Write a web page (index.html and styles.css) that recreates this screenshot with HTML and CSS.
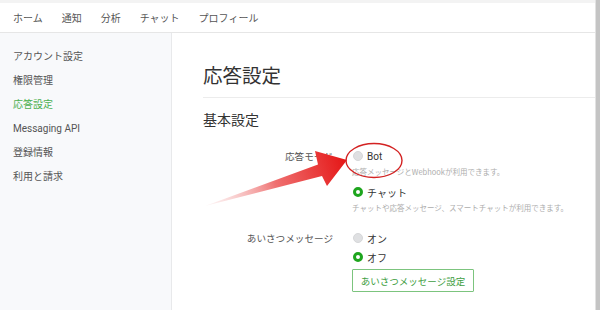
FILE: index.html
```html
<!DOCTYPE html>
<html lang="ja">
<head>
<meta charset="utf-8">
<link rel="stylesheet" href="styles.css">
</head>
<body>
<div class="window">
  <div class="page">
    <div class="topstrip"></div>
    <nav class="nav">
      <span class="nav-item">ホーム</span>
      <span class="nav-item">通知</span>
      <span class="nav-item">分析</span>
      <span class="nav-item">チャット</span>
      <span class="nav-item">プロフィール</span>
    </nav>
    <div class="layout">
      <aside class="sidebar">
        <div class="side-item">アカウント設定</div>
        <div class="side-item">権限管理</div>
        <div class="side-item active">応答設定</div>
        <div class="side-item latin">Messaging API</div>
        <div class="side-item">登録情報</div>
        <div class="side-item">利用と請求</div>
      </aside>
      <main class="main">
        <h1 class="title">応答設定</h1>
        <h2 class="subtitle">基本設定</h2>
        <div class="form">
          <div class="label">応答モード</div>
          <div class="control">
            <div class="option"><span class="radio"></span><span class="latin">Bot</span></div>
            <div class="desc">応答メッセージとWebhookが利用できます。</div>
            <div class="option gap"><span class="radio on"></span>チャット</div>
            <div class="desc">チャットや応答メッセージ、スマートチャットが利用できます。</div>
          </div>
          <div class="label row2">あいさつメッセージ</div>
          <div class="control row2">
            <div class="option"><span class="radio"></span>オン</div>
            <div class="option small-gap"><span class="radio on"></span>オフ</div>
            <button class="btn">あいさつメッセージ設定</button>
          </div>
        </div>
      </main>
    </div>
  </div>
  <div class="scrollbar"></div>
  <svg class="overlay" width="600" height="310" viewBox="0 0 600 310">
    <defs>
      <linearGradient id="ag" x1="205" y1="206" x2="346" y2="161" gradientUnits="userSpaceOnUse">
        <stop offset="0" stop-color="#f7d0d0" stop-opacity="0.2"/>
        <stop offset="0.5" stop-color="#ef7070"/>
        <stop offset="1" stop-color="#e51616"/>
      </linearGradient>
    </defs>
    <polygon points="205,206 318,164.5 315,151 347,160 327,186 322,176" fill="url(#ag)"/>
    <ellipse cx="374" cy="160.5" rx="28" ry="17" fill="none" stroke="#d32222" stroke-width="1.4"/>
  </svg>
</div>
</body>
</html>
```

FILE: styles.css
```css
* { box-sizing: border-box; }
html, body { margin: 0; padding: 0; }
body {
  width: 600px;
  height: 310px;
  overflow: hidden;
  background: #fff;
  font-family: "Noto Sans CJK JP", "Noto Sans", sans-serif;
  color: #444;
}
.window {
  position: relative;
  display: flex;
  width: 600px;
  height: 310px;
}
.page {
  flex: 1;
  display: flex;
  flex-direction: column;
  min-width: 0;
}
.topstrip {
  height: 3px;
  background: #f3f3f3;
}
.nav {
  height: 30px;
  display: flex;
  align-items: center;
  gap: 19px;
  padding-left: 13px;
  border-bottom: 1px solid #e6e6e6;
  font-size: 10px;
  color: #555;
}
.layout {
  flex: 1;
  display: flex;
}
.sidebar {
  width: 172px;
  background: #f8f9fb;
  border-right: 1px solid #e8e9eb;
  padding: 15.5px 0 0 13px;
  display: flex;
  flex-direction: column;
}
.side-item {
  height: 24.2px;
  line-height: 14px;
  font-size: 10px;
  color: #555;
  display: flex;
  align-items: flex-start;
}
.side-item.latin { padding-top: 1px; }
.side-item.active { color: #4bb04f; }
.latin { font-family: "Roboto", "Liberation Sans", sans-serif; }
.main {
  flex: 1;
  padding-left: 31px;
}
.title {
  margin: 0;
  padding-top: 29px;
  padding-bottom: 9px;
  height: 65px;
  line-height: 26px;
  font-size: 19.5px;
  font-weight: 400;
  color: #333;
  border-bottom: 1px solid #ececec;
}
.subtitle {
  margin: 12px 0 0;
  line-height: 18px;
  height: 18px;
  font-size: 14px;
  font-weight: 400;
  color: #333;
}
.form {
  display: grid;
  grid-template-columns: 130px 1fr;
  column-gap: 19px;
  margin-top: 20px;
}
.label {
  text-align: right;
  font-size: 9.6px;
  line-height: 16px;
  color: #555;
}
.row2 { margin-top: 15px; }
.option {
  display: flex;
  align-items: center;
  height: 16px;
  font-size: 10px;
  color: #333;
}
.option.gap { margin-top: 5px; }
.option.small-gap { margin-top: 3px; }
.radio {
  width: 10px;
  height: 10px;
  border-radius: 50%;
  background: #dfe0e2;
  border: 1px solid #d6d7d9;
  margin: 0 4px 0 1px;
  flex: none;
}
.radio.on {
  background: #fff;
  border: 3px solid #1ea51e;
}
.desc {
  margin-top: 1px;
  line-height: 14px;
  font-size: 7.5px;
  color: #adadad;
  white-space: nowrap;
}
.btn {
  display: block;
  margin-top: 4px;
  width: 122px;
  height: 23px;
  padding: 0;
  background: #fff;
  border: 1px solid #7cc47e;
  border-radius: 1px;
  font-family: "Noto Sans CJK JP", sans-serif;
  font-size: 9.5px;
  color: #3e9e42;
}
.scrollbar {
  width: 5px;
  background: #c4c4c4;
  border-left: 1px solid #e2e2e2;
}
.overlay {
  position: absolute;
  left: 0;
  top: 0;
  pointer-events: none;
}
```
